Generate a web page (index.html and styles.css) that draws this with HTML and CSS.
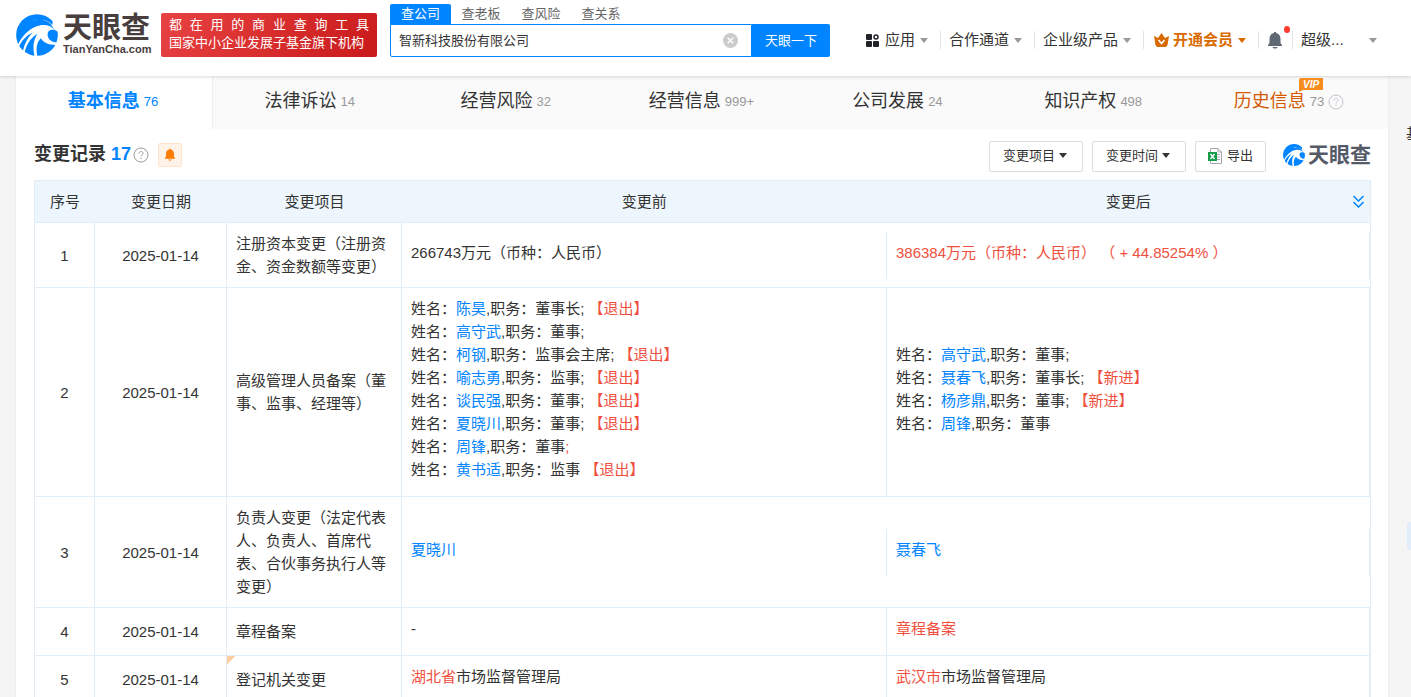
FILE: index.html
```html
<!DOCTYPE html>
<html lang="zh-CN">
    <head>
        <meta charset="UTF-8" />
        <meta name="viewport" content="width=device-width, initial-scale=1.0" />
        <title>智新科技股份有限公司 - 天眼查</title>
        <link rel="stylesheet" href="styles.css">
    </head>
    <body>
        <!-- shared icons -->
        <svg class="sprite" aria-hidden="true">
            <symbol id="logo" viewBox="12 15 125 125">
                <circle cx="74.500" cy="77.500" r="62" fill="#0084ff"/>
                <path d="M56 37C78 27 102 31 116 46L126 62L142 70V36L122 30L120 48C103 29 80 28 56 37Z" fill="#fff"/>
                <path d="M16 110C30 78 54 55 82 49C102 45 118 51 127 63C116 59 106 64 106 75C106 90 117 98 133 100L130 107C108 107 93 99 86 87C74 98 70 118 76 143L68 143C60 115 64 92 76 74C58 84 43 104 37 132L32 129C36 105 46 86 62 70C43 79 29 93 20 114Z" fill="#fff"/>
            </symbol>
            <symbol id="help" viewBox="0 0 16 16">
                <circle cx="8" cy="8" r="7" fill="none" stroke="currentColor"/>
                <path d="M6 6.500C6 3.800 10 3.800 10 6.300C10 7.800 8 7.900 8 9.500M8 10.800V12" fill="none" stroke="currentColor"/>
            </symbol>
            <symbol id="bell" viewBox="0 0 16 18">
                <path d="M7 2V1H9V2C12 2.500 13.500 5 13.500 8V12L15 14V15H1V14L2.500 12V8C2.500 5 4 2.500 7 2ZM5.500 16H10.500C10 18 6 18 5.500 16Z" fill="currentColor"/>
            </symbol>
        </svg>

        <header class="header">
            <a href="#" class="brand">
                <svg class="brand-icon"><use href="#logo"/></svg>
                <span class="brand-text">
                    <strong>天眼查</strong>
                    <small>TianYanCha.com</small>
                </span>
            </a>
            <div class="slogan">
                <p class="spread">都 在 用 的 商 业 查 询 工 具</p>
                <p>国家中小企业发展子基金旗下机构</p>
            </div>
            <form class="search">
                <div class="search-tabs">
                    <button type="button" class="active">查公司</button>
                    <button type="button">查老板</button>
                    <button type="button">查风险</button>
                    <button type="button">查关系</button>
                </div>
                <div class="search-row">
                    <div class="search-box">
                        <input type="text" value="智新科技股份有限公司" aria-label="公司名称">
                        <button type="button" class="clear" aria-label="清空">
                            <svg viewBox="0 0 16 16"><circle cx="8" cy="8" r="8" fill="#ccc"/><path d="M5 5L11 11M11 5L5 11" stroke="#fff" stroke-width="1.500"/></svg>
                        </button>
                    </div>
                    <button type="button" class="submit">天眼一下</button>
                </div>
            </form>
            <nav class="nav">
                <a href="#">
                    <svg class="apps" viewBox="0 0 13 13"><g fill="#1f2329"><rect width="6" height="6" rx="1"/><rect y="7" width="6" height="6" rx="1"/><rect x="7" y="7" width="6" height="6" rx="1"/></g><rect x="8" y="1" width="4" height="4" rx="2" fill="none" stroke="#1f2329" stroke-width="1.500"/></svg>
                    应用<i class="caret"></i>
                </a>
                <a href="#">合作通道<i class="caret"></i></a>
                <a href="#">企业级产品<i class="caret"></i></a>
                <a href="#" class="vip-link">
                    <svg class="crown" viewBox="0 0 15 14"><path d="M0 3L4 5L7.500 0L11 5L15 3L13.500 12Q13 14 11 14H4Q2 14 1.500 12Z" fill="#d96a00"/><path d="M4.500 7L7.500 10.500L10.500 7" fill="none" stroke="#fff" stroke-width="1.600"/></svg>
                    开通会员<i class="caret"></i>
                </a>
                <a href="#" class="notice" aria-label="消息"><svg><use href="#bell"/></svg></a>
                <a href="#" class="user">超级...<i class="caret"></i></a>
            </nav>
        </header>

        <div class="page">
            <main class="content">
                <nav class="tabs">
                    <a href="#" class="active">基本信息<span>76</span></a>
                    <a href="#">法律诉讼<span>14</span></a>
                    <a href="#">经营风险<span>32</span></a>
                    <a href="#">经营信息<span>999+</span></a>
                    <a href="#">公司发展<span>24</span></a>
                    <a href="#">知识产权<span>498</span></a>
                    <a href="#" class="history">
                        <b>历史信息<svg class="vip" viewBox="0 0 24 14"><path d="M2 0H24V12H4L0 14V2Q0 0 2 0Z" fill="#f78d1e"/><text x="4" y="10">VIP</text></svg></b>
                        <span>73</span>
                        <svg class="help"><use href="#help"/></svg>
                    </a>
                </nav>

                <section class="records">
                    <div class="records-head">
                        <h2>变更记录 <em>17</em></h2>
                        <svg class="help"><use href="#help"/></svg>
                        <button type="button" class="follow" aria-label="订阅"><svg><use href="#bell"/></svg></button>
                        <div class="tools">
                            <button type="button">变更项目<i class="caret"></i></button>
                            <button type="button">变更时间<i class="caret"></i></button>
                            <button type="button" class="export">
                                <svg viewBox="0 0 14 16"><path d="M2.500 0.500H10L13.500 4V15.500H2.500Z" fill="#fff" stroke="#a5a9ae"/><path d="M10 0.500V4H13.500" fill="none" stroke="#a5a9ae"/><path d="M9 6.500H12M9 9H12M9 11.500H12" stroke="#a5a9ae"/><rect y="4" width="9" height="9" fill="#159c49"/><path d="M2.500 6L6.500 11M6.500 6L2.500 11" stroke="#fff" stroke-width="1.300"/></svg>
                                导出
                            </button>
                            <span class="mark"><svg><use href="#logo"/></svg>天眼查</span>
                        </div>
                    </div>

                    <table class="table">
                        <colgroup>
                            <col class="col-no"><col class="col-date"><col class="col-item"><col><col>
                        </colgroup>
                        <thead>
                            <tr>
                                <th>序号</th>
                                <th>变更日期</th>
                                <th>变更项目</th>
                                <th>变更前</th>
                                <th class="last">变更后
                                    <button type="button" class="expand" aria-label="展开"><svg viewBox="0 0 12 13"><path d="M1 1L6 6L11 1M1 7L6 12L11 7" fill="none" stroke="#0084ff" stroke-width="1.500"/></svg></button>
                                </th>
                            </tr>
                        </thead>
                        <tbody>
                            <tr>
                                <td class="center">1</td>
                                <td class="center">2025-01-14</td>
                                <td>注册资本变更（注册资金、资金数额等变更）</td>
                                <td colspan="2" class="diff">
                                    <div class="compare">
                                        <div>266743万元（币种：人民币）</div>
                                        <div><mark>386384万元（币种：人民币） （ + 44.85254% ）</mark></div>
                                    </div>
                                </td>
                            </tr>
                            <tr>
                                <td class="center">2</td>
                                <td class="center">2025-01-14</td>
                                <td>高级管理人员备案（董事、监事、经理等）</td>
                                <td colspan="2" class="diff">
                                    <div class="compare">
                                        <div>
                                            姓名：<a href="#">陈昊</a>,职务：董事长; <mark>【退出】</mark><br>
                                            姓名：<a href="#">高守武</a>,职务：董事;<br>
                                            姓名：<a href="#">柯钢</a>,职务：监事会主席; <mark>【退出】</mark><br>
                                            姓名：<a href="#">喻志勇</a>,职务：监事; <mark>【退出】</mark><br>
                                            姓名：<a href="#">谈民强</a>,职务：董事; <mark>【退出】</mark><br>
                                            姓名：<a href="#">夏晓川</a>,职务：董事; <mark>【退出】</mark><br>
                                            姓名：<a href="#">周锋</a>,职务：董事<mark>;</mark><br>
                                            姓名：<a href="#">黄书适</a>,职务：监事 <mark>【退出】</mark>
                                        </div>
                                        <div>
                                            姓名：<a href="#">高守武</a>,职务：董事;<br>
                                            姓名：<a href="#">聂春飞</a>,职务：董事长; <mark>【新进】</mark><br>
                                            姓名：<a href="#">杨彦鼎</a>,职务：董事; <mark>【新进】</mark><br>
                                            姓名：<a href="#">周锋</a>,职务：董事
                                        </div>
                                    </div>
                                </td>
                            </tr>
                            <tr>
                                <td class="center">3</td>
                                <td class="center">2025-01-14</td>
                                <td>负责人变更（法定代表人、负责人、首席代表、合伙事务执行人等变更）</td>
                                <td colspan="2" class="diff">
                                    <div class="compare">
                                        <div><a href="#">夏晓川</a></div>
                                        <div><a href="#">聂春飞</a></div>
                                    </div>
                                </td>
                            </tr>
                            <tr>
                                <td class="center">4</td>
                                <td class="center">2025-01-14</td>
                                <td>章程备案</td>
                                <td colspan="2" class="diff">
                                    <div class="compare">
                                        <div>-</div>
                                        <div><mark>章程备案</mark></div>
                                    </div>
                                </td>
                            </tr>
                            <tr>
                                <td class="center">5</td>
                                <td class="center">2025-01-14</td>
                                <td class="flag">登记机关变更</td>
                                <td colspan="2" class="diff">
                                    <div class="compare">
                                        <div><mark>湖北省</mark>市场监督管理局</div>
                                        <div><mark>武汉市</mark>市场监督管理局</div>
                                    </div>
                                </td>
                            </tr>
                        </tbody>
                    </table>
                </section>
            </main>
            <aside class="rail">
                <span>基</span>
                <i class="handle"></i>
            </aside>
        </div>
    </body>
</html>
```
FILE: styles.css
```css
* {
    box-sizing: border-box;
}
body {
    margin: 0;
    height: 100vh;
    overflow: hidden;
    display: flex;
    flex-direction: column;
    background-color: #f5f5f5;
    color: #333;
    font-family: "Liberation Sans", "Noto Sans CJK SC", sans-serif;
    font-size: 15px;
    line-height: 23px;
    text-spacing-trim: space-all;
}
a {
    color: #0084ff;
    text-decoration: none;
}
p, h2 {
    margin: 0;
}
button, input {
    font: inherit;
    color: inherit;
    border: none;
    padding: 0;
    background: none;
}
mark {
    background: none;
    color: #f04f3e;
}
svg {
    display: block;
}
.sprite {
    position: absolute;
    width: 0;
    height: 0;
}
.caret {
    width: 0;
    border: 4px solid transparent;
    border-top: 5px solid #999;
    border-bottom: none;
}

/* header */
.header {
    position: relative;
    flex: none;
    height: 76px;
    display: flex;
    align-items: flex-start;
    padding: 0 34px 0 16px;
    background-color: #fff;
    box-shadow: 0 1px 3px rgba(0, 0, 0, 0.15);
}
.brand {
    display: flex;
    gap: 5px;
    width: 136px;
    margin-top: 14px;
    color: #483e3e;
}
.brand-icon {
    flex: none;
    width: 42px;
    height: 42px;
}
.brand-text strong {
    display: block;
    font-size: 29px;
    line-height: 29px;
}
.brand-text small {
    display: block;
    font-size: 11px;
    line-height: 12px;
    font-weight: bold;
}
.slogan {
    width: 216px;
    height: 44px;
    margin: 13px 13px 0 9px;
    padding: 3px 8px;
    border-radius: 2px;
    background-image: linear-gradient(120deg, #e84242, #c91a1a);
    color: #fff;
    font-size: 13px;
    line-height: 18px;
    white-space: nowrap;
}
.spread {
    text-align-last: justify;
}
.search {
    width: 440px;
    margin-top: 4px;
    font-size: 13px;
}
.search-tabs {
    display: flex;
}
.search-tabs button {
    width: 60px;
    height: 20px;
    line-height: 18px;
    color: #666;
}
.search-tabs .active {
    width: 61px;
    background-color: #0084ff;
    color: #fff;
    border-radius: 2px 2px 0 0;
}
.search-row {
    display: flex;
    height: 33px;
}
.search-box {
    flex: 1;
    display: flex;
    align-items: center;
    padding: 0 13px 0 8px;
    border: 1px solid #0084ff;
    border-radius: 0 0 0 2px;
}
.search-box input {
    flex: 1;
    outline: none;
}
.clear, .clear svg {
    width: 15px;
    height: 15px;
}
.submit {
    width: 78px;
    background-color: #0084ff;
    color: #fff;
    border-radius: 0 2px 2px 0;
}
.nav {
    flex: 1;
    display: flex;
    margin: 31px 0 0 28px;
    line-height: 16px;
    white-space: nowrap;
}
.nav a {
    display: flex;
    align-items: center;
    padding: 0 12px 0 8px;
    color: #333;
    border-left: 1px solid #e5e5e5;
}
.nav a:first-child {
    border-left: none;
}
.nav .caret {
    margin-left: 5px;
}
.apps {
    width: 13px;
    height: 13px;
    margin-right: 6px;
}
.crown {
    width: 15px;
    height: 14px;
    margin-right: 4px;
}
.nav .vip-link {
    padding-left: 10px;
    color: #d96a00;
    font-weight: bold;
}
.vip-link .caret {
    border-top-color: #d96a00;
}
.nav .notice {
    position: relative;
    padding-right: 9px;
    color: #5f6873;
}
.notice svg {
    width: 16px;
    height: 18px;
}
.notice::after {
    content: "";
    position: absolute;
    top: -5px;
    right: 2px;
    width: 6px;
    height: 7px;
    border-radius: 50%;
    background-color: #ff3b30;
}
.nav .user {
    flex: 1;
    justify-content: space-between;
    padding-right: 0;
}

/* page */
.page {
    flex: 1;
    min-height: 0;
    display: flex;
    padding-left: 15px;
    overflow: hidden;
}
.content {
    flex: 1;
    align-self: flex-start;
    background-color: #fff;
    border: 1px solid #eee;
    border-top: none;
}
.rail {
    width: 22px;
    padding: 46px 0 0 17px;
    overflow: hidden;
}
.rail span {
    display: block;
}
.handle {
    display: block;
    width: 16px;
    height: 28px;
    margin: 377px 0 0 1px;
    border-radius: 2px;
    background-color: #e1edf9;
}
.tabs {
    display: flex;
    height: 53px;
    background-color: #fafafa;
}
.tabs a {
    flex: 1 1 0;
    display: flex;
    align-items: center;
    justify-content: center;
    gap: 4px;
    padding: 0 2px 2px 0;
    color: #333;
    font-size: 18px;
    white-space: nowrap;
}
.tabs span {
    color: #999;
    font-size: 13px;
}
.tabs .active {
    background-color: #fff;
    border-right: 1px solid #eee;
    color: #0084ff;
    font-weight: bold;
}
.tabs .active span {
    color: #0084ff;
    font-weight: normal;
}
.tabs b {
    position: relative;
    font-weight: normal;
    color: #d45a00;
}
.vip {
    position: absolute;
    right: -17px;
    top: -12px;
    width: 24px;
    height: 14px;
}
.vip text {
    fill: #fff;
    font-size: 10px;
    font-weight: bold;
    font-style: italic;
}
.help {
    width: 16px;
    height: 16px;
    color: #999;
}
.tabs .help {
    color: #c0c4cc;
}

/* change records */
.records {
    padding: 0 17px 0 18px;
}
.records-head {
    display: flex;
    align-items: center;
    height: 51px;
}
.records-head h2 {
    margin-right: 2px;
    font-size: 18px;
}
.records-head em {
    color: #0084ff;
    font-style: normal;
}
.follow {
    display: flex;
    align-items: center;
    justify-content: center;
    width: 24px;
    height: 24px;
    margin-left: 9px;
    border: 1px solid #ffe4cc;
    border-radius: 2px;
    background-color: #fff3e8;
    color: #ff7d00;
}
.follow svg {
    width: 12px;
    height: 13px;
}
.tools {
    display: flex;
    align-items: center;
    gap: 9px;
    height: 31px;
    margin: 4px 0 0 auto;
    font-size: 13px;
}
.tools button {
    display: flex;
    align-items: center;
    height: 31px;
    padding: 0 15px 2px 13px;
    border: 1px solid #dcdcdc;
    border-radius: 2px;
}
.tools .caret {
    margin-left: 4px;
    border-top-color: #333;
}
.tools .export {
    gap: 5px;
    padding: 0 12px 2px;
}
.export svg {
    width: 14px;
    height: 16px;
}
.mark {
    display: flex;
    align-items: center;
    gap: 3px;
    margin: -4px 0 0 8px;
    color: #545a66;
    font-size: 21px;
    font-weight: bold;
}
.mark svg {
    width: 22px;
    height: 22px;
}
.table {
    width: 100%;
    table-layout: fixed;
    border-collapse: separate;
    border-spacing: 0;
    border-top: 1px solid #e1edf7;
    border-left: 1px solid #e1edf7;
}
.col-no {
    width: 60px;
}
.col-date {
    width: 132px;
}
.col-item {
    width: 175px;
}
.table th {
    height: 42px;
    padding: 0;
    background-color: #eef6fd;
    border-bottom: 1px solid #e1edf7;
    font-weight: normal;
}
.table .last {
    position: relative;
    border-right: 1px solid #e1edf7;
}
.expand {
    position: absolute;
    right: 5px;
    top: 14px;
}
.expand svg {
    width: 13px;
    height: 13px;
}
.table td {
    padding: 9px;
    border-right: 1px solid #e1edf7;
    border-bottom: 1px solid #e1edf7;
}
.table .center {
    text-align: center;
}
.table .diff {
    padding: 0;
}
.compare {
    display: grid;
    grid-template-columns: 1fr 1fr;
}
.compare > div {
    display: flow-root;
    align-content: center;
    padding: 9px 9px 15px;
}
.compare > div + div {
    border-left: 1px solid #e1edf7;
    border-right: 1px solid #e1edf7;
}
.table .flag {
    background-image: linear-gradient(135deg, #fbcfa0 6px, transparent 6px);
}
```
